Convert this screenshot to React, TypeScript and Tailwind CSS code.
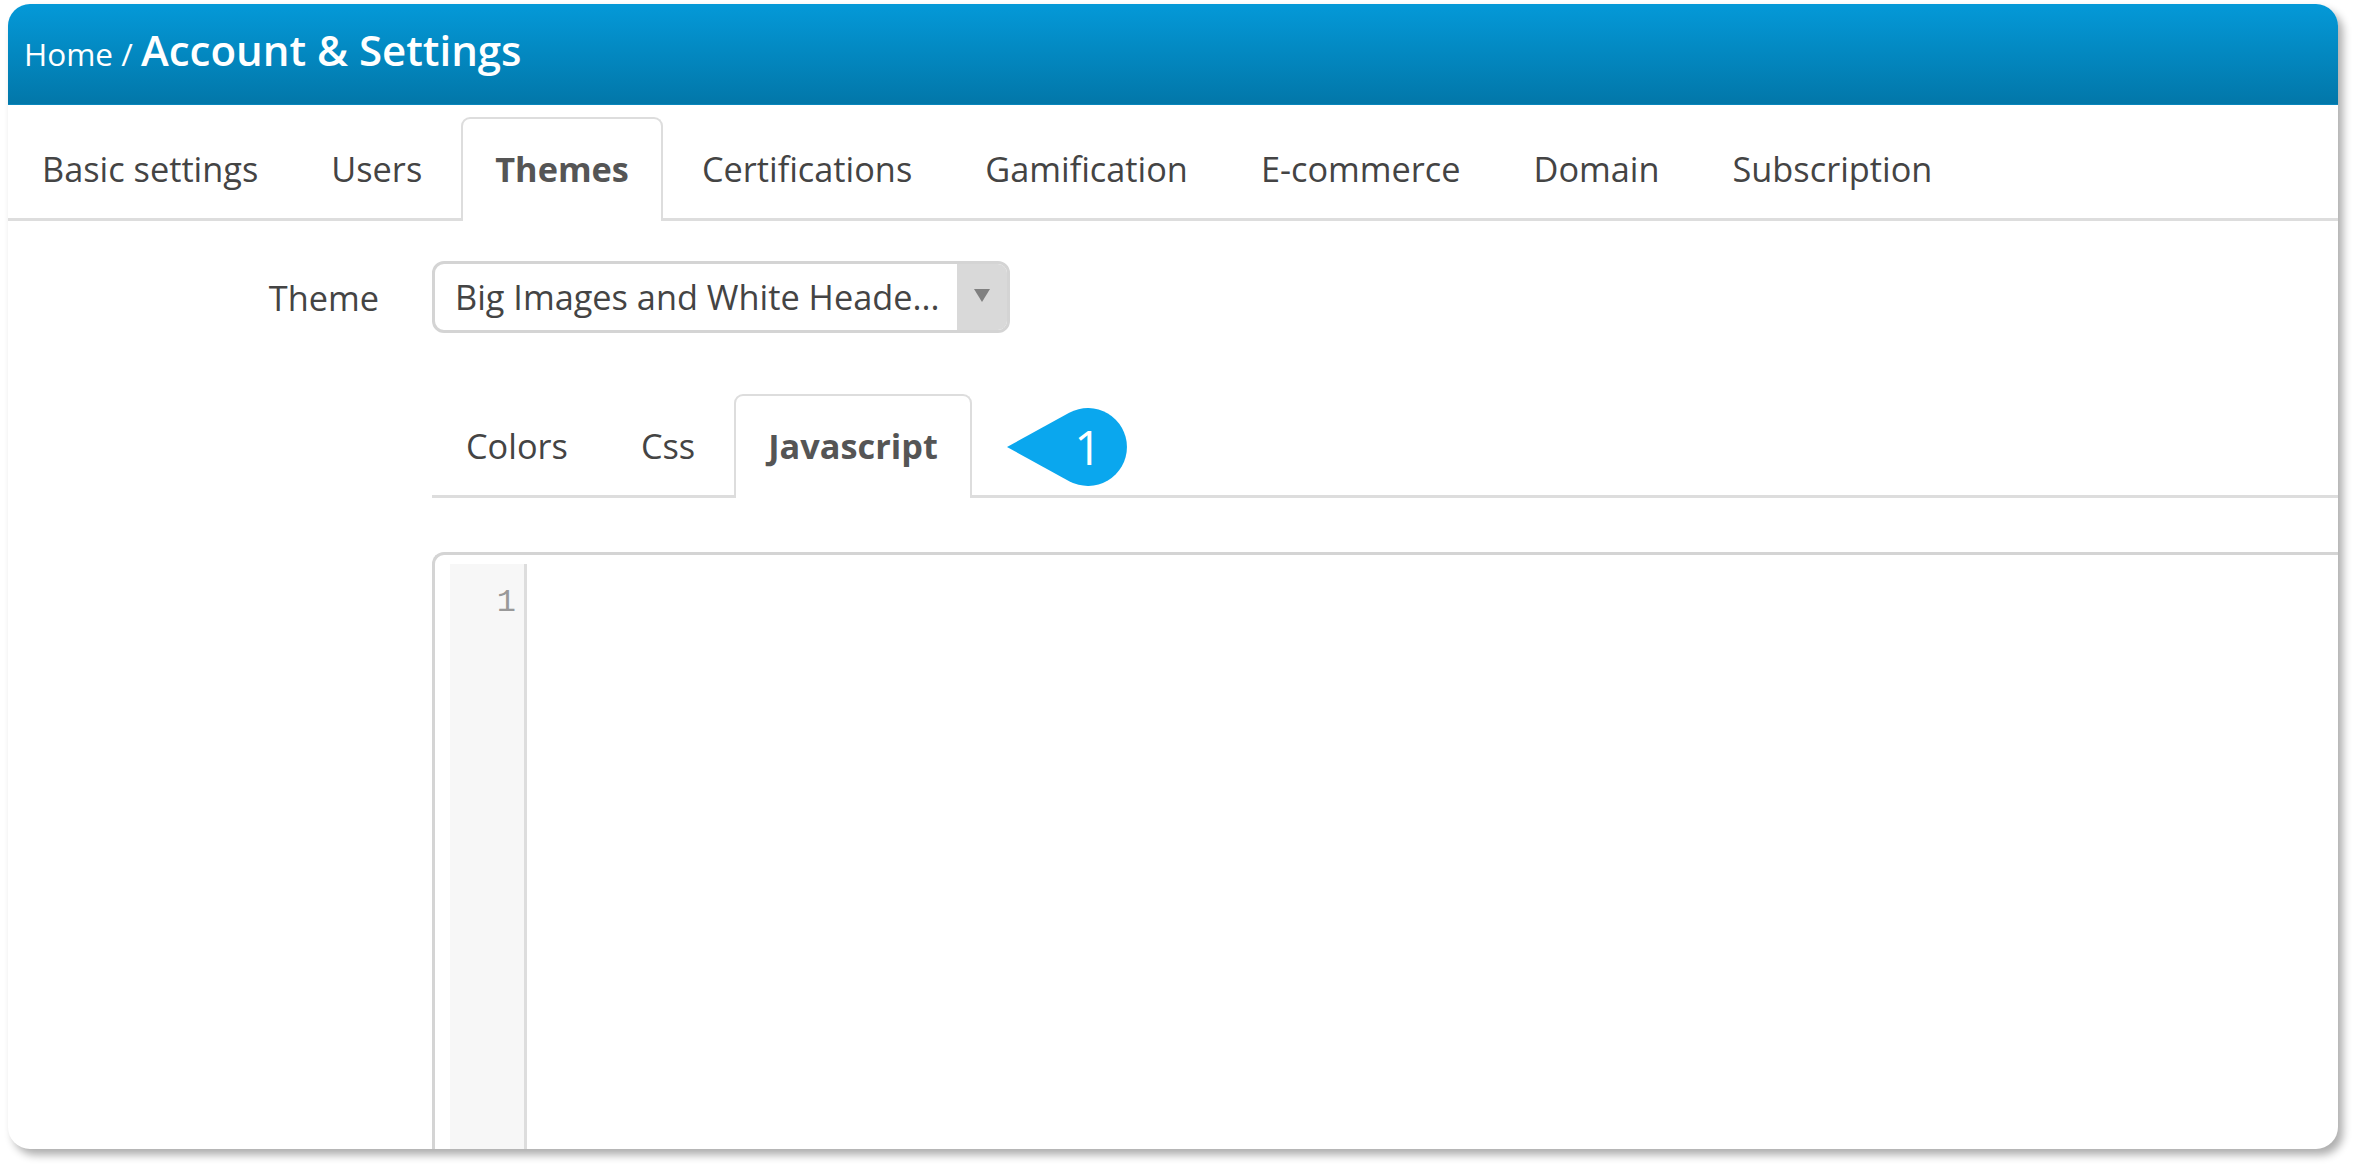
const mainTabs = [
  { label: "Basic settings" },
  { label: "Users" },
  { label: "Themes", active: true },
  { label: "Certifications" },
  { label: "Gamification" },
  { label: "E-commerce" },
  { label: "Domain" },
  { label: "Subscription" },
];

const subTabs = [
  { label: "Colors" },
  { label: "Css" },
  { label: "Javascript", active: true },
];

const Tab = ({ label, active }: { label: string; active?: boolean }) => (
  <div
    className={
      active
        ? "h-[104px] -mb-[3px] px-[32px] pb-[2px] flex items-center border-2 border-b-0 border-[#dddddd] rounded-t-[9px] bg-white font-bold text-[#555555]"
        : "h-[104px] -mb-[3px] px-[32px] pb-[2px] flex items-center border-2 border-b-0 border-transparent text-[#444444]"
    }
  >
    {label}
  </div>
);

const App = () => {
  return (
    <div className="w-[2354px] h-[1169px] bg-white pt-1 pl-2 font-['Open_Sans',sans-serif] overflow-hidden">
      <div className="w-[2330px] h-[1145px] rounded-[22px] bg-white shadow-[5px_6px_9px_rgba(0,0,0,0.32)] flex flex-col overflow-hidden">
        <div className="h-[101px] shrink-0 flex items-baseline pl-[16px] pt-[14px] text-white bg-gradient-to-b from-[#0499d8] to-[#0277a9] border-b border-[#0a86bb]">
          <span className="text-[31.5px]">Home /&nbsp;</span>
          <span className="text-[42px] font-semibold">Account &amp; Settings</span>
        </div>

        <div className="h-[116px] shrink-0 flex items-end gap-[5px] border-b-[3px] border-[#dddddd] text-[34.3px]">
          {mainTabs.map((t) => (
            <Tab key={t.label} label={t.label} active={t.active} />
          ))}
        </div>

        <div className="flex-1 min-h-0 flex flex-col pl-[424px]">
          <div className="relative mt-[40px] shrink-0">
            <span className="absolute right-full mr-[53px] top-[11px] text-[34.3px] text-[#444444] whitespace-nowrap">Theme</span>
            <div className="w-[578px] h-[72px] flex border-[3px] border-[#d4d4d4] rounded-[12px] overflow-hidden text-[34.3px] text-[#444444]">
              <div className="flex-1 pl-[20px] flex items-center whitespace-nowrap">Big Images and White Heade...</div>
              <div className="w-[50px] bg-[#d9d9d9] flex items-start justify-center pt-[25px]">
                <svg width="16" height="13" viewBox="0 0 16 13">
                  <path d="M0 0 H16 L8 13 Z" fill="#808080" />
                </svg>
              </div>
            </div>
          </div>

          <div className="relative mt-[60px] h-[105px] shrink-0 flex items-end gap-[5px] border-b-[3px] border-[#dddddd] text-[34.3px]">
            {subTabs.map((t) => (
              <Tab key={t.label} label={t.label} active={t.active} />
            ))}
            <div className="absolute left-[575px] top-[15px] w-[120px] h-[78px]">
              <svg width="120" height="78" viewBox="0 0 120 78" className="absolute inset-0">
                <path d="M0 39 L62.2 4.8 A39 39 0 1 1 62.2 73.2 Z" fill="#0aa7ee" />
              </svg>
              <span className="absolute left-[42px] top-0 w-[78px] h-[78px] flex items-center justify-center text-white text-[48px]">1</span>
            </div>
          </div>

          <div className="mt-[54px] flex-1 min-h-0 flex border-[3px] border-b-0 border-r-0 border-[#d4d4d4] rounded-tl-[12px] pl-[15px] pt-[9px]">
            <div className="w-[77px] bg-[#f7f7f7] border-r-[3px] border-[#dddddd] pr-[8px] pt-[21px] text-right font-['Liberation_Mono',monospace] text-[32px] leading-[36px] text-[#999999]">
              1
            </div>
          </div>
        </div>
      </div>
    </div>
  );
};

export default App;
